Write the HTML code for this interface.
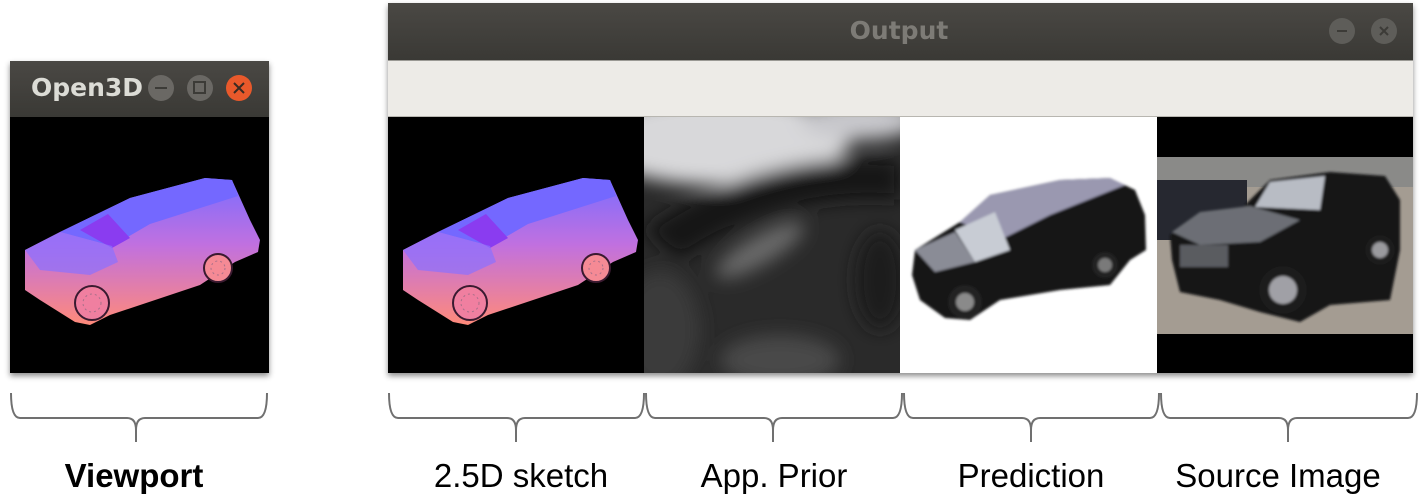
<!DOCTYPE html>
<html><head><meta charset="utf-8"><style>
html,body{margin:0;padding:0;background:#fff;width:1426px;height:503px;overflow:hidden;font-family:"Liberation Sans",sans-serif}
.lbl{position:absolute;top:457px;font-size:33px;color:#000;transform:translateX(-50%);white-space:nowrap}
</style></head><body>
<svg width="1426" height="503" style="position:absolute;left:0;top:0">
<defs>
<linearGradient id="bg" x1="0" y1="0" x2="0" y2="1"><stop offset="0" stop-color="#7a6dff"/><stop offset="0.45" stop-color="#c070e0"/><stop offset="1" stop-color="#ff8a7a"/></linearGradient>
<linearGradient id="tb" x1="0" y1="0" x2="0" y2="1"><stop offset="0" stop-color="#4a4844"/><stop offset="1" stop-color="#3a3935"/></linearGradient>
<filter id="bl" x="-20%" y="-20%" width="140%" height="140%"><feGaussianBlur stdDeviation="9"/></filter>
<filter id="bl2"><feGaussianBlur stdDeviation="1.2"/></filter>
<filter id="sh" x="-10%" y="-10%" width="120%" height="120%"><feDropShadow dx="0" dy="3" stdDeviation="3" flood-opacity="0.45"/></filter>
<clipPath id="cp"><rect x="644" y="117" width="256" height="256"/></clipPath>
<clipPath id="cs"><rect x="1157" y="157" width="256" height="177"/></clipPath>
<g id="car">
<polygon fill="url(#bg)" points="25,250 60,232 95,215 130,198 205,178 232,180 250,220 260,240 258,252 235,262 200,285 110,315 90,325 75,322 40,300 25,290"/>
<polygon fill="#7468ff" points="60,232 95,215 130,198 205,178 232,180 238,196 150,224 112,246"/>
<polygon fill="#8a3cf0" points="80,230 108,214 130,238 112,248"/>
<polygon fill="#8a70ff" opacity="0.7" points="25,250 60,232 112,246 118,262 90,275 40,270"/>
<circle cx="92" cy="303" r="17" fill="#f07fa0" stroke="#3a1a30" stroke-width="2"/><circle cx="92" cy="303" r="9" fill="none" stroke="#a8708a" stroke-dasharray="2 3"/>
<circle cx="218" cy="268" r="14" fill="#f58a95" stroke="#3a1a30" stroke-width="2"/><circle cx="218" cy="268" r="7" fill="none" stroke="#a8708a" stroke-dasharray="2 3"/>
</g>
</defs>
<!-- viewport window -->
<g filter="url(#sh)"><rect x="10" y="61" width="259" height="312" fill="#000"/></g>
<rect x="10" y="61" width="259" height="56" fill="url(#tb)"/>
<text x="31" y="96" font-size="25" font-weight="bold" fill="#dcdcd6" font-family="DejaVu Sans,sans-serif">Open3D</text>
<circle cx="161" cy="88" r="13" fill="#6a6864"/><rect x="155" y="87" width="12" height="2" fill="#3c3b37"/>
<circle cx="200" cy="88" r="13" fill="#6a6864"/><rect x="194" y="82" width="11" height="11" fill="none" stroke="#3c3b37" stroke-width="2"/>
<circle cx="239" cy="88" r="13" fill="#e9592b"/><path d="M234 83 L244 93 M244 83 L234 93" stroke="#3a2a22" stroke-width="2"/>
<use href="#car"/>
<!-- output window -->
<g filter="url(#sh)"><rect x="388" y="3" width="1025" height="370" fill="#000"/></g>
<rect x="388" y="3" width="1025" height="57" fill="url(#tb)"/>
<text x="899" y="39" font-size="25" font-weight="bold" fill="#7d7b76" text-anchor="middle" font-family="DejaVu Sans,sans-serif">Output</text>
<circle cx="1342" cy="31" r="13" fill="#5e5d59"/><rect x="1337" y="30" width="10" height="2" fill="#3c3b37"/>
<circle cx="1384" cy="31" r="13" fill="#5e5d59"/><path d="M1380 27 L1388 35 M1388 27 L1380 35" stroke="#3c3b37" stroke-width="2"/>
<rect x="388" y="60" width="1025" height="57" fill="#edebe7"/>
<rect x="388" y="60" width="1025" height="1" fill="#9a9994"/><rect x="388" y="116" width="1025" height="1" fill="#b8b6b0"/>
<rect x="388" y="117" width="256" height="256" fill="#000"/>
<use href="#car" transform="translate(378,0)"/>
<!-- app prior -->
<g clip-path="url(#cp)">
<rect x="644" y="117" width="256" height="256" fill="#2a2a2a"/>
<g filter="url(#bl)">
<ellipse cx="720" cy="140" rx="130" ry="45" fill="#d8d8da"/>
<ellipse cx="860" cy="120" rx="60" ry="20" fill="#c8c8cc"/>
<path d="M644 230 Q760 150 900 160 L900 200 Q780 190 680 260 Z" fill="#141414"/>
<ellipse cx="760" cy="250" rx="50" ry="14" fill="#6a6a6a" transform="rotate(-30 760 250)"/>
<ellipse cx="660" cy="330" rx="40" ry="60" fill="#3a3a3a"/>
<ellipse cx="780" cy="360" rx="60" ry="25" fill="#4a4a4a"/>
<ellipse cx="880" cy="280" rx="25" ry="50" fill="#1c1c1c"/>
</g>
</g>
<!-- prediction -->
<rect x="900" y="117" width="257" height="256" fill="#fff"/>
<g filter="url(#bl2)">
<polygon fill="#141518" points="915,250 960,222 990,195 1060,180 1110,178 1135,190 1145,215 1146,250 1130,260 1110,285 1060,290 1000,300 970,320 945,318 920,300 912,275"/>
<polygon fill="#9a98b0" points="960,222 990,195 1060,180 1110,178 1125,185 1050,215 1000,240"/>
<polygon fill="#c8ccd4" points="955,230 995,212 1010,250 975,262"/>
<polygon fill="#8a8c96" points="915,250 955,232 975,262 935,272"/>
<circle cx="965" cy="302" r="17" fill="#222"/><circle cx="965" cy="302" r="9" fill="#8a8a8a"/>
<circle cx="1105" cy="265" r="13" fill="#222"/><circle cx="1105" cy="265" r="7" fill="#7a7a7a"/>
</g>
<!-- source -->
<rect x="1157" y="117" width="256" height="256" fill="#000"/>
<g clip-path="url(#cs)">
<rect x="1157" y="157" width="256" height="177" fill="#a49c92"/>
<rect x="1157" y="157" width="256" height="30" fill="#8a8a88"/>
<rect x="1157" y="180" width="90" height="60" fill="#262830"/>
<g filter="url(#bl2)">
<polygon fill="#121316" points="1170,235 1200,215 1240,210 1270,180 1330,172 1385,176 1400,200 1400,250 1390,300 1330,305 1300,322 1260,312 1220,300 1180,292 1172,260"/>
<polygon fill="#6c6e74" points="1172,232 1200,212 1250,206 1300,220 1260,242 1200,245"/>
<polygon fill="#b8bcc4" points="1270,182 1325,176 1320,210 1255,207"/>
<rect x="1180" y="245" width="48" height="22" fill="#5a5c60"/>
<circle cx="1283" cy="290" r="24" fill="#1a1a1a"/><circle cx="1283" cy="290" r="14" fill="#a0a0a6"/>
<circle cx="1380" cy="250" r="15" fill="#1a1a1a"/><circle cx="1380" cy="250" r="8" fill="#9a9a9e"/>
</g>
</g>
<!-- braces -->
<g fill="none" stroke="#707070" stroke-width="2">
<path d="M11 393 Q11 418 20 418 L127 418 Q136 418 136 430 L136 442 M136 430 Q136 418 145 418 L258 418 Q267 418 267 393"/>
<path d="M389 393 Q389 418 398 418 L507 418 Q516 418 516 430 L516 442 M516 430 Q516 418 525 418 L635 418 Q644 418 644 393"/>
<path d="M646 393 Q646 418 655 418 L764 418 Q773 418 773 430 L773 442 M773 430 Q773 418 782 418 L893 418 Q902 418 902 393"/>
<path d="M904 393 Q904 418 913 418 L1022 418 Q1031 418 1031 430 L1031 442 M1031 430 Q1031 418 1040 418 L1150 418 Q1159 418 1159 393"/>
<path d="M1161 393 Q1161 418 1170 418 L1279 418 Q1288 418 1288 430 L1288 442 M1288 430 Q1288 418 1297 418 L1408 418 Q1417 418 1417 393"/>
</g>
</svg>
<div class="lbl" style="left:134px;font-weight:bold">Viewport</div>
<div class="lbl" style="left:521px">2.5D sketch</div>
<div class="lbl" style="left:774px">App. Prior</div>
<div class="lbl" style="left:1031px">Prediction</div>
<div class="lbl" style="left:1278px">Source Image</div>
</body></html>
